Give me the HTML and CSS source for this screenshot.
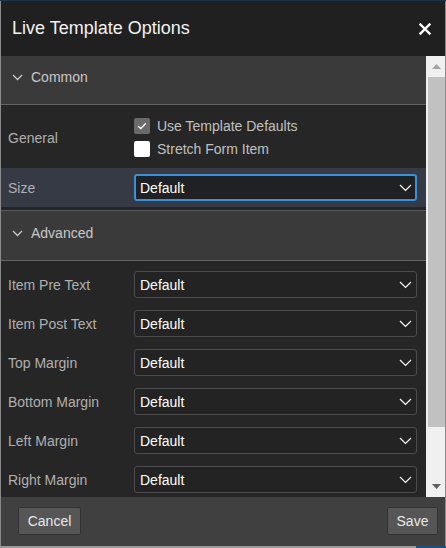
FILE: index.html
```html
<!DOCTYPE html>
<html lang="en">
<head>
<meta charset="utf-8">
<title>Live Template Options</title>
<link rel="stylesheet" href="styles.css">
</head>
<body>
<div class="dialog">
  <div class="titlebar">
    <h1 class="title">Live Template Options</h1>
    <button class="close" aria-label="Close">
      <svg width="12" height="12" viewBox="0 0 12 12"><path d="M1.5 1.5 L10.5 10.5 M10.5 1.5 L1.5 10.5" stroke="#ffffff" stroke-width="2.4" stroke-linecap="square"/></svg>
    </button>
  </div>
  <div class="body">
    <div class="content">
      <div class="section-head first">
        <svg class="chev" width="11" height="7" viewBox="0 0 11 7"><path d="M1 1 L5.5 5.5 L10 1" fill="none" stroke="#c8c8c8" stroke-width="1.3"/></svg>
        <span>Common</span>
      </div>
      <div class="row general">
        <div class="label">General</div>
        <div class="checks">
          <label class="check"><span class="box checked"><svg width="10" height="8" viewBox="0 0 10 8"><path d="M1.2 4.2 L3.8 6.6 L8.8 1.2" fill="none" stroke="#ffffff" stroke-width="1.3"/></svg></span>Use Template Defaults</label>
          <label class="check"><span class="box"></span>Stretch Form Item</label>
        </div>
      </div>
      <div class="row size">
        <div class="label">Size</div>
        <div class="select focused"><span>Default</span><svg class="arrow" width="13" height="8" viewBox="0 0 13 8"><path d="M1 1 L6.5 6.5 L12 1" fill="none" stroke="#ffffff" stroke-width="1.2"/></svg></div>
      </div>
      <div class="section-head adv">
        <svg class="chev" width="11" height="7" viewBox="0 0 11 7"><path d="M1 1 L5.5 5.5 L10 1" fill="none" stroke="#c8c8c8" stroke-width="1.3"/></svg>
        <span>Advanced</span>
      </div>
      <div class="rows">
        <div class="row"><div class="label">Item Pre Text</div><div class="select"><span>Default</span><svg class="arrow" width="13" height="8" viewBox="0 0 13 8"><path d="M1 1 L6.5 6.5 L12 1" fill="none" stroke="#ffffff" stroke-width="1.2"/></svg></div></div>
        <div class="row"><div class="label">Item Post Text</div><div class="select"><span>Default</span><svg class="arrow" width="13" height="8" viewBox="0 0 13 8"><path d="M1 1 L6.5 6.5 L12 1" fill="none" stroke="#ffffff" stroke-width="1.2"/></svg></div></div>
        <div class="row"><div class="label">Top Margin</div><div class="select"><span>Default</span><svg class="arrow" width="13" height="8" viewBox="0 0 13 8"><path d="M1 1 L6.5 6.5 L12 1" fill="none" stroke="#ffffff" stroke-width="1.2"/></svg></div></div>
        <div class="row"><div class="label">Bottom Margin</div><div class="select"><span>Default</span><svg class="arrow" width="13" height="8" viewBox="0 0 13 8"><path d="M1 1 L6.5 6.5 L12 1" fill="none" stroke="#ffffff" stroke-width="1.2"/></svg></div></div>
        <div class="row"><div class="label">Left Margin</div><div class="select"><span>Default</span><svg class="arrow" width="13" height="8" viewBox="0 0 13 8"><path d="M1 1 L6.5 6.5 L12 1" fill="none" stroke="#ffffff" stroke-width="1.2"/></svg></div></div>
        <div class="row"><div class="label">Right Margin</div><div class="select"><span>Default</span><svg class="arrow" width="13" height="8" viewBox="0 0 13 8"><path d="M1 1 L6.5 6.5 L12 1" fill="none" stroke="#ffffff" stroke-width="1.2"/></svg></div></div>
      </div>
    </div>
    <div class="scrollbar">
      <div class="sb-btn"><svg width="9" height="5" viewBox="0 0 9 5"><path d="M0 5 L4.5 0 L9 5 Z" fill="#a3a3a3"/></svg></div>
      <div class="sb-track"><div class="sb-thumb"></div></div>
      <div class="sb-btn"><svg width="9" height="5" viewBox="0 0 9 5"><path d="M0 0 L4.5 5 L9 0 Z" fill="#606060"/></svg></div>
    </div>
  </div>
  <div class="footer">
    <button class="btn cancel">Cancel</button>
    <button class="btn save">Save</button>
  </div>
</div>
<div class="bottom-edge"><div class="edge-grey"></div><div class="edge-blue"></div></div>
</body>
</html>
```
FILE: styles.css
```css
* { box-sizing: border-box; }
html, body { margin: 0; padding: 0; }
body {
  width: 446px;
  height: 548px;
  background: #1d3347;
  padding-top: 1px;
  font-family: "Liberation Sans", Arial, sans-serif;
  font-size: 14px;
  overflow: hidden;
}
.dialog {
  width: 446px;
  height: 545px;
  display: flex;
  flex-direction: column;
  border-left: 1px solid #8a8a8a;
  border-right: 1px solid #8a8a8a;
  background: #262626;
}
.titlebar {
  height: 55px;
  flex: none;
  background: #202020;
  display: flex;
  align-items: center;
  justify-content: space-between;
  padding: 0 14px 0 11px;
}
.title {
  margin: 0;
  font-size: 18px;
  font-weight: normal;
  color: #f2f2f2;
}
.close {
  background: none;
  border: 0;
  padding: 0;
  width: 12px;
  height: 12px;
  display: flex;
}
.body {
  flex: 1;
  display: flex;
  min-height: 0;
}
.content {
  width: 425px;
  flex: none;
  overflow: hidden;
  background: #262626;
}
.section-head {
  display: flex;
  align-items: center;
  gap: 8px;
  padding-left: 11px;
  background: #3a3a3a;
  color: #c8c8c8;
  font-size: 14px;
}
.section-head.first {
  height: 49px;
  border-bottom: 1px solid #626262;
  padding-bottom: 7px;
}
.section-head.adv {
  height: 51px;
  margin-top: 3px;
  border-top: 1px solid #5a5a5a;
  border-bottom: 1px solid #626262;
  padding-bottom: 6px;
}
.chev { flex: none; margin-top: 2px; }
.row {
  display: flex;
  align-items: center;
  height: 39px;
  padding-right: 9px;
}
.row .label {
  width: 133px;
  flex: none;
  padding-left: 7px;
  color: #b0b0b0;
}
.row.general {
  height: 63px;
  padding-top: 2px;
}
.checks {
  display: flex;
  flex-direction: column;
  gap: 7px;
}
.check {
  display: flex;
  align-items: center;
  gap: 7px;
  color: #c0c0c0;
  height: 16px;
}
.box {
  width: 16px;
  height: 16px;
  border-radius: 2px;
  background: #ffffff;
  display: flex;
  align-items: center;
  justify-content: center;
  flex: none;
}
.box.checked { background: #6a6a6a; }
.row.size { background: #353a45; }
.rows { padding-top: 4px; }
.select {
  width: 283px;
  height: 27px;
  flex: none;
  display: flex;
  align-items: center;
  justify-content: space-between;
  padding: 0 4px 0 5px;
  border: 1px solid #4c4c4c;
  border-radius: 3px;
  background: #232323;
  color: #ffffff;
}
.select.focused {
  border: 2px solid #3a90d9;
  padding-left: 4px;
  padding-right: 3px;
  background: #202124;
}
.arrow { margin-top: 1px; }
.scrollbar {
  width: 19px;
  flex: none;
  display: flex;
  flex-direction: column;
  background: #f0f0f0;
}
.sb-btn {
  height: 21px;
  display: flex;
  align-items: center;
  justify-content: center;
  flex: none;
  padding-left: 2px;
}
.sb-track {
  flex: 1;
  padding-left: 2px;
}
.sb-thumb {
  height: 350px;
  background: #c1c1c1;
}
.footer {
  height: 49px;
  flex: none;
  background: #404040;
  display: flex;
  align-items: center;
  justify-content: space-between;
  padding: 0 7px 1px 17px;
}
.btn {
  height: 28px;
  padding: 0;
  font-family: "Liberation Sans", Arial, sans-serif;
  font-size: 14px;
  color: #e8e8e8;
  background: #565656;
  border: 1px solid #333333;
  border-radius: 2px;
}
.btn.cancel { width: 63px; }
.btn.save { width: 51px; }
.bottom-edge {
  display: flex;
  height: 2px;
}
.edge-grey { flex: 1; background: #9a9a9a; }
.edge-blue { width: 30px; background: #1a4f86; }
```
